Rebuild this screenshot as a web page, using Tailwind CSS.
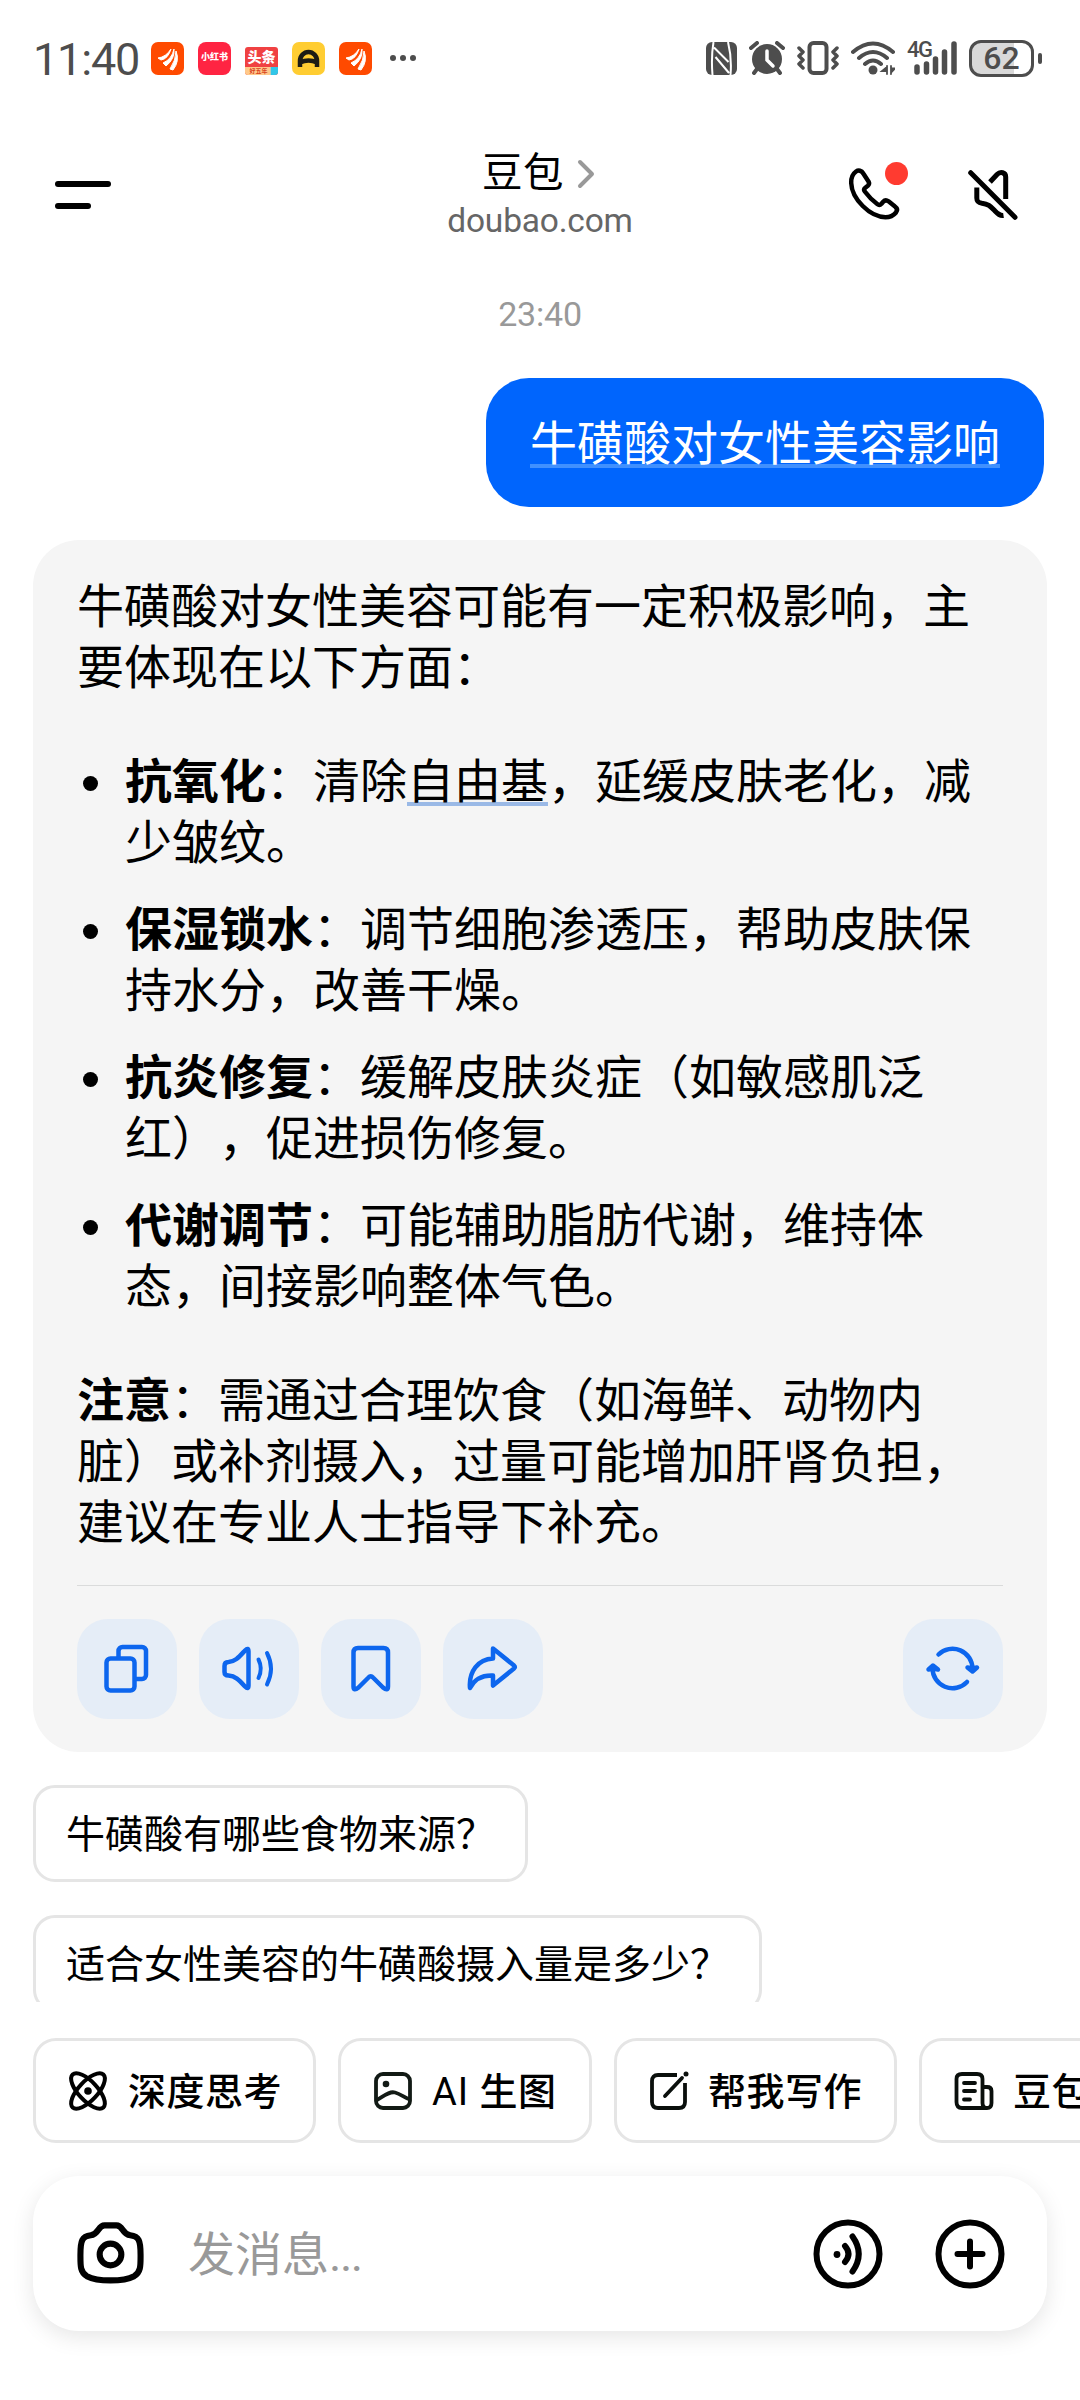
<!DOCTYPE html>
<html lang="zh-CN">
  <head>
    <meta charset="UTF-8" />
    <meta name="viewport" content="width=device-width, initial-scale=1.0" />
    <script src="https://cdn.jsdelivr.net/npm/@tailwindcss/browser@4"></script>
    <title>豆包</title>
  </head>
  <body class="bg-white">
    <div class="w-[1080px] h-[2400px] overflow-hidden flex flex-col bg-white text-black font-[Roboto,'Noto_Sans_CJK_SC',sans-serif]">

      <!-- status bar -->
      <div class="h-[116px] shrink-0 flex items-center justify-between pl-[33px] pr-[38px] text-[#4d4d4d]">
        <div class="flex items-center">
          <span class="w-[118px] text-[45px] leading-none tracking-[-1.2px] whitespace-nowrap pt-[2px]">11:40</span>
          <div class="flex items-center gap-[14px]">
            <svg class="w-[33px] h-[33px]" viewBox="0 0 33 33">
              <rect width="33" height="33" rx="7" fill="#ff4a00" />
              <path d="M7 16Q15 15 20 7Q17 17 10 18ZM12 21Q21 17 23 7Q24 17 15 24ZM19 27Q25 18 25 9Q29 19 22 28Z" fill="#fff" stroke="#fff" stroke-linejoin="round" />
            </svg>
            <div class="w-[33px] h-[33px] rounded-[8px] bg-[#ff2442] text-white text-[9px] font-black flex items-center justify-center whitespace-nowrap">小红书</div>
            <div class="w-[33px] h-[28px] mt-[5px] rounded-[3px] overflow-hidden flex flex-col bg-[#f04142] text-white text-center">
              <span class="h-[20px] text-[14px] leading-[21px] font-black">头条</span>
              <span class="h-[8px] bg-linear-to-r from-[#ffc98b] from-75% to-[#31c6e8] to-80% text-[#d8431f] text-[6px] leading-[8px] font-bold pr-[6px]">好五年</span>
            </div>
            <svg class="w-[33px] h-[33px]" viewBox="0 0 33 33">
              <rect width="33" height="33" rx="7" fill="#ffcd32" />
              <path d="M8 25v-6a8.500 9 0 0 1 17 0v6M8 20.500q8.500-4 17 0" fill="none" stroke="#1c1c14" stroke-width="4.500" />
            </svg>
            <svg class="w-[33px] h-[33px]" viewBox="0 0 33 33">
              <rect width="33" height="33" rx="7" fill="#ff4a00" />
              <path d="M7 16Q15 15 20 7Q17 17 10 18ZM12 21Q21 17 23 7Q24 17 15 24ZM19 27Q25 18 25 9Q29 19 22 28Z" fill="#fff" stroke="#fff" stroke-linejoin="round" />
            </svg>
          </div>
          <svg class="w-[28px] h-[8px] ml-[17px]" viewBox="0 0 28 8" fill="#4d4d4d">
            <circle cx="4" cy="4" r="3" /><circle cx="14" cy="4" r="3" /><circle cx="24" cy="4" r="3" />
          </svg>
        </div>

        <div class="flex items-center">
          <!-- nfc -->
          <svg class="w-[31px] h-[33px] mr-[12px]" viewBox="0 0 31 33">
            <rect width="31" height="33" rx="6" fill="#4d4d4d" />
            <path d="M6.500 33Q5 15 7.500 0M8 5.500L22.500 20M22 0Q26 16 24.500 33M9.500 15L23 31" stroke="#fff" stroke-width="2" fill="none" />
          </svg>
          <!-- alarm -->
          <svg class="w-[36px] h-[34px] mr-[12px]" viewBox="0 0 36 34">
            <circle cx="18" cy="18" r="15" fill="#4d4d4d" />
            <path d="M2 7l6-5M34 7l-6-5M8 28l-3 4M28 28l3 4" stroke="#4d4d4d" stroke-width="4" stroke-linecap="round" />
            <path d="M18 10v9l6 6" stroke="#fff" stroke-width="3.500" fill="none" stroke-linecap="round" />
          </svg>
          <!-- vibrate -->
          <svg class="w-[42px] h-[34px] mr-[12px]" viewBox="0 0 42 34" fill="none" stroke="#4d4d4d">
            <rect x="12.500" y="2" width="17" height="30" rx="4" stroke-width="4" />
            <path d="M2 7l4 4-4 4 4 4-4 4 4 4M40 7l-4 4 4 4-4 4 4 4-4 4" stroke-width="3.500" stroke-linecap="round" stroke-linejoin="round" />
          </svg>
          <!-- wifi -->
          <svg class="w-[44px] h-[34px] mr-[12px]" viewBox="0 0 44 34" fill="none" stroke="#4d4d4d" stroke-width="4" stroke-linecap="round">
            <path d="M2 11q20-17 40 0M8 17q14-12 28 0M14 23q8-7 16 0" />
            <circle cx="22" cy="29" r="4.500" fill="#4d4d4d" stroke="none" />
            <path d="M36 25v8M36 26l-5 4h5zM40 33v-8M40 31.500l4-4h-4z" stroke-width="1.800" fill="#4d4d4d" />
          </svg>
          <!-- signal -->
          <div class="relative w-[50px] h-[34px] mr-[12px]">
            <span class="absolute left-0 -top-px text-[22px] leading-[20px] font-medium tracking-[-1.5px]">4G</span>
            <svg class="w-[50px] h-[34px]" viewBox="0 0 50 34" stroke="#4d4d4d" stroke-width="5.500" stroke-linecap="round">
              <path d="M10 26v5M19.500 23v8M28.500 18v13M37.500 11v20M47 3v28" />
            </svg>
          </div>
          <!-- battery -->
          <div class="relative w-[65px] h-[37px] rounded-[12px] border-[3px] border-[#4d4d4d] bg-linear-to-r from-[#d9d9d9] from-72% to-white to-72% flex items-center justify-center text-[32px] leading-none font-medium">62</div>
          <div class="w-[4px] h-[11px] ml-[4px] rounded-full bg-[#4d4d4d]"></div>
        </div>
      </div>

      <!-- header -->
      <div class="h-[160px] shrink-0 flex justify-between">
        <div class="w-[245px] pl-[55px] pt-[65px] flex flex-col gap-[16px]">
          <div class="w-[56px] h-[6px] rounded-[3px] bg-black"></div>
          <div class="w-[36px] h-[6px] rounded-[3px] bg-black"></div>
        </div>
        <div class="flex flex-col items-center pt-[32px]">
          <div class="flex items-center mr-[3px]">
            <span class="text-[40.500px] leading-[50px] tracking-[0.5px]">豆包</span>
            <svg class="w-[18px] h-[30px] ml-[13px] mt-[2px]" viewBox="0 0 18 30" fill="none" stroke="#999" stroke-width="4" stroke-linecap="round" stroke-linejoin="round">
              <path d="M3 3l12 12L3 27" />
            </svg>
          </div>
          <span class="text-[33.500px] leading-[40px] mt-[3px] text-[#666] tracking-[-0.200px]">doubao.com</span>
        </div>
        <div class="w-[245px] flex pt-[39px]">
          <div class="relative w-[70px] h-[75px]">
            <svg class="w-[70px] h-[75px]" viewBox="0 0 70 75" fill="none" stroke="#000" stroke-width="4.500" stroke-linejoin="round">
              <path d="M21 16.500C17.500 19 16 23 16.200 28C16.800 44 35 62 50.500 62.200C55 62.200 58.500 60.500 61 57.500C62.700 55.200 62 53 60 51.500L53.500 46.300C51.300 44.700 49.500 45.200 48.200 46.700L46.500 48.700C45.200 50.100 43.600 50.100 42.200 49C37.500 45.500 33.500 41.500 29.800 36.500C28.800 35.100 29 33.700 30.300 32.700L32.800 30.800C34.300 29.500 34.500 28.200 33.500 26.500L28.300 18.500C26.500 15.500 23.500 14.800 21 16.500Z" />
            </svg>
            <div class="absolute left-[50px] top-[7px] w-[23px] h-[23px] rounded-full bg-[#ff3b30]"></div>
          </div>
          <svg class="w-[70px] h-[75px] ml-[55px]" viewBox="0 0 70 75" fill="none" stroke="#000" stroke-width="5">
            <path d="M10.700 17.700L55 62.300" stroke-linecap="round" />
            <path d="M30 27L37 19.500C40.500 16 45.700 17.500 45.700 22V44M16.800 32.500V43C16.800 46.500 18.500 47.700 22 48.200C29 49 31 52 35 56C38 59 40 61 43.500 60.500" />
          </svg>
        </div>
      </div>

      <!-- messages -->
      <div class="h-[1726px] shrink-0 overflow-hidden flex flex-col px-[33px]">
        <div class="h-[102px] shrink-0 pt-[18px] text-center text-[34px] leading-[40px] text-[#999] tracking-[-0.200px]">23:40</div>

        <div class="h-[129px] shrink-0 self-end mr-[3px] px-[44px] rounded-[43px] bg-[#0065fd] text-white flex items-center">
          <span class="text-[47px] leading-[61px] whitespace-nowrap underline decoration-[#4090fe] decoration-4 underline-offset-[4px] [text-decoration-skip-ink:none] pt-[2px]">牛磺酸对女性美容影响</span>
        </div>

        <div class="h-[1212px] shrink-0 mt-[33px] px-[44px] pt-[36px] rounded-[46px] bg-[#f5f5f5] text-[47px] leading-[61px] whitespace-nowrap [text-spacing-trim:space-all]">
          <p>牛磺酸对女性美容可能有一定积极影响，主<br />要体现在以下方面：</p>
          <ul class="mt-[53px] flex flex-col gap-[26px]">
            <li class="flex">
              <span class="w-[15px] h-[15px] ml-[6px] mr-[27px] mt-[25px] rounded-full bg-black"></span>
              <span><b>抗氧化</b>：清除<span class="underline decoration-[#9ab9e6] decoration-4 underline-offset-[4px] [text-decoration-skip-ink:none]">自由基</span>，延缓皮肤老化，减<br />少皱纹。</span>
            </li>
            <li class="flex">
              <span class="w-[15px] h-[15px] ml-[6px] mr-[27px] mt-[25px] rounded-full bg-black"></span>
              <span><b>保湿锁水</b>：调节细胞渗透压，帮助皮肤保<br />持水分，改善干燥。</span>
            </li>
            <li class="flex">
              <span class="w-[15px] h-[15px] ml-[6px] mr-[27px] mt-[25px] rounded-full bg-black"></span>
              <span><b>抗炎修复</b>：缓解皮肤炎症（如敏感肌泛<br />红），促进损伤修复。</span>
            </li>
            <li class="flex">
              <span class="w-[15px] h-[15px] ml-[6px] mr-[27px] mt-[25px] rounded-full bg-black"></span>
              <span><b>代谢调节</b>：可能辅助脂肪代谢，维持体<br />态，间接影响整体气色。</span>
            </li>
          </ul>
          <p class="mt-[53px]"><b>注意</b>：需通过合理饮食（如海鲜、动物内<br />脏）或补剂摄入，过量可能增加肝肾负担，<br />建议在专业人士指导下补充。</p>

          <div class="mt-[32px] border-t border-[#dadbdb] pt-[33px] flex gap-[22px] w-[926px]">
            <div class="w-[100px] h-[100px] rounded-[31px] bg-[#e5edf7] flex items-center justify-center">
              <svg class="w-[60px] h-[60px]" viewBox="0 0 60 60" fill="none" stroke="#0d66ee" stroke-width="4.500" stroke-linejoin="round">
                <rect x="9.500" y="19.500" width="28" height="32" rx="4" />
                <path d="M21.500 19.500V12a4 4 0 0 1 4-4H45a4 4 0 0 1 4 4V36a4 4 0 0 1-4 4H37.500" />
              </svg>
            </div>
            <div class="w-[100px] h-[100px] rounded-[31px] bg-[#e5edf7] flex items-center justify-center">
              <svg class="w-[60px] h-[60px]" viewBox="0 0 60 60" fill="none" stroke="#0d66ee" stroke-width="4.500" stroke-linejoin="round" stroke-linecap="round">
                <path d="M5.500 27Q5.500 23 9.500 23C16.500 22.500 20 18 26 11.500Q29.500 8 29.500 12.500V46.500Q29.500 51 26 47.500C20 41 16.500 37 9.500 36.500Q5.500 36.500 5.500 33Z" />
                <path d="M39.500 20.500Q44 29.500 39.500 39M48 14Q56 29.500 48 45.500" stroke-width="4" />
              </svg>
            </div>
            <div class="w-[100px] h-[100px] rounded-[31px] bg-[#e5edf7] flex items-center justify-center">
              <svg class="w-[60px] h-[60px]" viewBox="0 0 60 60" fill="none" stroke="#0d66ee" stroke-width="4.500" stroke-linejoin="round">
                <path d="M12.500 13.500Q12.500 9 17 9H42.500Q47 9 47 13.500V47.500Q47 52.500 42 48.500L32 38.500Q29.700 36 27.500 38.500L17.500 48.500Q12.500 52.500 12.500 47.500Z" />
              </svg>
            </div>
            <div class="w-[100px] h-[100px] rounded-[31px] bg-[#e5edf7] flex items-center justify-center">
              <svg class="w-[60px] h-[60px]" viewBox="0 0 60 60" fill="none" stroke="#0d66ee" stroke-width="4.500" stroke-linejoin="round">
                <path d="M30 19.500V9.500L51 26.500Q52.500 28 51 29.500L30 46.500V36.500C19 36 11 41 7 49C5.500 33 15 20 30 19.500Z" />
              </svg>
            </div>
            <div class="w-[100px] h-[100px] ml-auto rounded-[31px] bg-[#e5edf7] flex items-center justify-center">
              <svg class="w-[60px] h-[60px]" viewBox="0 0 60 60" fill="none" stroke="#0d66ee" stroke-width="4.500" stroke-linejoin="round" stroke-linecap="round">
                <path d="M15.500 15.500A20 20 0 0 1 49.500 30M9.500 29A20 20 0 0 0 44 43" />
                <path d="M44.500 28.500L49.500 32.500L54 28.500L49.500 29.500ZM5.500 30.500L10 26.500L15 30.500L10 29.500Z" fill="#0d66ee" />
              </svg>
            </div>
          </div>
        </div>

        <div class="mt-[33px] flex flex-col items-start gap-[33px] text-[39px] leading-[50px] whitespace-nowrap">
          <div class="w-[495px] h-[97px] shrink-0 px-[30px] pt-[2px] rounded-[22px] border-[3px] border-[#e5e5e5] flex items-center">牛磺酸有哪些食物来源？</div>
          <div class="w-[729px] h-[97px] shrink-0 px-[30px] pt-[2px] rounded-[22px] border-[3px] border-[#e5e5e5] flex items-center">适合女性美容的牛磺酸摄入量是多少？</div>
        </div>
      </div>

      <!-- shortcuts -->
      <div class="mt-[36px] pl-[33px] h-[105px] shrink-0 flex gap-[22px] text-[38px] font-medium tracking-[0.5px] whitespace-nowrap">
        <div class="w-[283px] shrink-0 pl-[30px] rounded-[23px] border-[3px] border-[#e5e5e5] flex items-center">
          <svg class="w-[44px] h-[44px] mr-[18px]" viewBox="0 0 44 44" fill="none" stroke="#000" stroke-width="4">
            <ellipse cx="22" cy="22" rx="22.500" ry="9.500" transform="rotate(47 22 22)" />
            <ellipse cx="22" cy="22" rx="22.500" ry="9.500" transform="rotate(-47 22 22)" />
            <circle cx="22" cy="22" r="3.800" fill="#000" stroke="none" />
          </svg>
          <span class="pt-[3px]">深度思考</span>
        </div>
        <div class="w-[254px] shrink-0 pl-[30px] rounded-[23px] border-[3px] border-[#e5e5e5] flex items-center">
          <svg class="w-[44px] h-[44px] mr-[17px]" viewBox="0 0 44 44" fill="none" stroke="#121a15" stroke-width="3.800">
            <rect x="5" y="5" width="34" height="34" rx="7" />
            <circle cx="15" cy="15" r="3.300" fill="#121a15" stroke="none" />
            <path d="M5 31.500C13 27 18 22 24 23.500C30 25 33 28.500 39 30.500" />
          </svg>
          <span class="pt-[3px]"><span class="font-normal tracking-[1px]">AI </span>生图</span>
        </div>
        <div class="w-[283px] shrink-0 pl-[30px] rounded-[23px] border-[3px] border-[#e5e5e5] flex items-center">
          <svg class="w-[44px] h-[44px] mr-[17px]" viewBox="0 0 44 44" fill="none" stroke="#0a0f0c" stroke-width="3.800">
            <path d="M30 6H11Q5 6 5 12V33Q5 39 11 39H32Q38 39 38 33V14" />
            <path d="M18 27L35 9" stroke-linecap="round" />
            <circle cx="39" cy="5" r="2.500" fill="#0a0f0c" stroke="none" />
          </svg>
          <span class="pt-[3px]">帮我写作</span>
        </div>
        <div class="w-[283px] shrink-0 pl-[30px] rounded-[23px] border-[3px] border-[#e5e5e5] flex items-center">
          <svg class="w-[44px] h-[44px] mr-[17px]" viewBox="0 0 44 44" fill="none" stroke="#0a0f0c" stroke-width="3.800">
            <path d="M10 39Q4.500 39 4.500 33V10Q4.500 5 10 5H25Q30.500 5 30.500 10V18H35Q39.500 18 39.500 22V34Q39.500 39 35 39ZM30.500 18V34Q30.500 39 35 39" />
            <path d="M12 14H23M12 22H23M12 30.500H18" stroke-linecap="round" />
          </svg>
          <span class="pt-[3px]">豆包</span>
        </div>
      </div>

      <!-- message input -->
      <div class="mt-[33px] mx-[33px] h-[155px] shrink-0 rounded-[46px] bg-white shadow-[0_6px_22px_rgba(0,0,0,0.100)] flex items-center pl-[41px] pr-[42px]">
        <svg class="w-[73px] h-[69px]" viewBox="0 0 74 70" fill="none" stroke="#000" stroke-width="6.200">
          <path d="M31 6.500H43C50 6.500 48.500 15.500 57 16.500C66 17.500 67.500 22 67.500 36C67.500 47 68 54 61 58C50 63.700 24 63.700 13 58C6 54 6.500 47 6.500 36C6.500 22 8 17.500 17 16.500C25.500 15.500 24 6.500 31 6.500Z" />
          <circle cx="37" cy="36" r="11" />
        </svg>
        <span class="ml-[41px] pt-[2px] text-[47px] leading-[60px] text-[#999]">发消息<span class="tracking-[-1.5px]">...</span></span>
        <svg class="w-[70px] h-[70px] ml-auto" viewBox="0 0 70 70" fill="none" stroke="#000" stroke-width="6" stroke-linecap="round">
          <circle cx="35" cy="35" r="31.500" />
          <circle cx="24" cy="35.500" r="3.400" fill="#000" stroke="none" />
          <path d="M32 27Q39 35 32 43M39.500 17.500Q52 35 39.500 52.500" />
        </svg>
        <svg class="w-[70px] h-[70px] ml-[52px]" viewBox="0 0 70 70" fill="none" stroke="#000" stroke-width="6" stroke-linecap="round">
          <circle cx="35" cy="35" r="31.500" />
          <path d="M35 22.500V47.500M22.500 35H47.500" />
        </svg>
      </div>
    </div>
  </body>
</html>
